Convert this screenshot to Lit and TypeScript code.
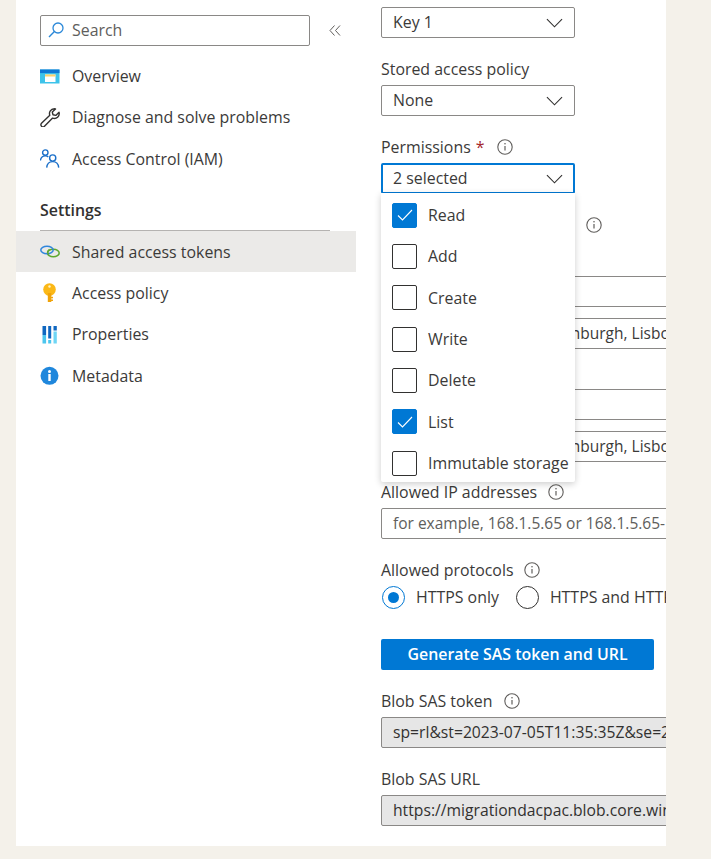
import { LitElement, html, css, svg } from "lit";
import { customElement } from "lit/decorators.js";

const chevron = html`<svg class="chev" viewBox="0 0 18 10" width="17" height="10"><path d="M1 1l8 8 8-8" fill="none" stroke="#323130" stroke-width="1.2"/></svg>`;
const info = html`<svg class="info" viewBox="0 0 16 16" width="16" height="16"><circle cx="8" cy="8" r="7.2" fill="none" stroke="#605e5c" stroke-width="1.1"/><path d="M8 7v4.6" stroke="#605e5c" stroke-width="1.2"/><circle cx="8" cy="4.8" r=".8" fill="#605e5c"/></svg>`;

const icons: Record<string, unknown> = {
  overview: svg`<rect x="0" y="2.500" width="19.500" height="14" fill="#3ec3ea"/><rect x="0" y="2.500" width="19.500" height="3.600" fill="#0f78d4"/><rect x="5" y="7.500" width="10.500" height="7.500" fill="#fff"/><rect x="5" y="7.500" width="10.500" height="2" fill="#fcd26b"/>`,
  wrench: svg`<path d="M14.200 .8a4.800 4.800 0 0 0-4.400 6.500L1.500 15.300a2.100 2.100 0 0 0 3 3l8.100-8.200a4.800 4.800 0 0 0 6.400-5.800l-3.200 3.100-2.800-.7-.7-2.700 3.200-3.100a4.800 4.800 0 0 0-1.300-.1z" fill="none" stroke="#323130" stroke-width="1.400" stroke-linejoin="round"/>`,
  users: svg`<g fill="none" stroke="#1a6fc9" stroke-width="1.400"><circle cx="5.300" cy="3.600" r="2.700"/><path d="M.4 11.500c.5-3 2.200-4.600 4.900-4.600 1.200 0 2.200.3 3 1"/><circle cx="12.700" cy="9" r="3.100"/><path d="M6.700 18.600c.3-3.500 2.600-6 6-6s5.700 2.500 6 6"/></g>`,
  links: svg`<g fill="none" stroke-width="1.500"><ellipse cx="13.300" cy="11" rx="5.900" ry="3.800" stroke="#5da82f"/><ellipse cx="7" cy="8" rx="6.200" ry="3.800" stroke="#2f86dc"/><path d="M9 12.500a6 3.800 0 0 1 .6-5.200" stroke="#5da82f"/></g>`,
  key: svg`<circle cx="9.500" cy="6.500" r="6.300" fill="#fbb817"/><rect x="7.800" y="10" width="3.500" height="9" fill="#f0a30a"/><rect x="11" y="13.800" width="2" height="1.500" fill="#f0a30a"/><rect x="11" y="16.500" width="2" height="1.500" fill="#f0a30a"/><circle cx="9.500" cy="3.500" r="1.200" fill="#fff2c4"/>`,
  props: svg`<rect x="2.500" y="1" width="3.600" height="9" fill="#0f67c0"/><rect x="2.500" y="10" width="3.600" height="8.500" fill="#4cc6ee"/><rect x="8.200" y="1" width="3" height="12.500" fill="#0f67c0"/><rect x="8.200" y="15" width="3" height="3.500" fill="#4cc6ee"/><rect x="13.500" y="1" width="3.300" height="4.500" fill="#0f67c0"/><rect x="13.500" y="6.500" width="3.300" height="12" fill="#6fd6f5"/>`,
  meta: svg`<circle cx="9.500" cy="9.800" r="9" fill="#1f87dc"/><rect x="8.300" y="8" width="2.400" height="7" fill="#fff"/><circle cx="9.500" cy="5.400" r="1.500" fill="#fff"/>`,
};

const top = [
  ["overview", "Overview"],
  ["wrench", "Diagnose and solve problems"],
  ["users", "Access Control (IAM)"],
];
const settings = [
  ["links", "Shared access tokens", true],
  ["key", "Access policy", false],
  ["props", "Properties", false],
  ["meta", "Metadata", false],
];
const perms: [string, boolean][] = [
  ["Read", true],
  ["Add", false],
  ["Create", false],
  ["Write", false],
  ["Delete", false],
  ["List", true],
  ["Immutable storage", false],
];
const tz = "(UTC+00:00) Dublin, Edinburgh, Lisbon, London";

@customElement("app-root")
export class AppRoot extends LitElement {
  static styles = css`
    :host {
      display: block;
      min-height: 859px;
      background: #f4f1ea;
      font-family: "Open Sans", "Noto Sans", sans-serif;
      font-size: 15.9px;
      color: #3b3a39;
    }
    .panel {
      display: flex;
      width: 650px;
      height: 846px;
      margin-left: 16px;
      background: #fff;
      overflow: hidden;
    }
    .side {
      flex: 0 0 340px;
      padding-top: 15px;
    }
    .search-row {
      display: flex;
      align-items: center;
      padding-left: 24px;
      margin-bottom: 9.5px;
    }
    .search {
      box-sizing: border-box;
      width: 270px;
      height: 31px;
      border: 1px solid #8a8886;
      border-radius: 2px;
      display: flex;
      align-items: center;
      gap: 8px;
      padding: 0 0 2px 7px;
      color: #605e5c;
    }
    .collapse {
      margin-left: 19px;
    }
    .nav {
      height: 41.33px;
      display: flex;
      align-items: center;
      gap: 12px;
      padding-left: 24px;
    }
    .nav.sel {
      background: #ebeae8;
    }
    .nav svg {
      flex: none;
      width: 20px;
      height: 19px;
    }
    .section {
      margin: 20.5px 26px 0 24px;
      height: 31px;
      box-sizing: border-box;
      border-bottom: 1px solid #b5b3b1;
      font-weight: 600;
      color: #323130;
      line-height: 21px;
    }
    .main {
      flex: 1;
      min-width: 0;
      position: relative;
      overflow: hidden;
      padding: 7px 0 0 25px;
    }
    .field {
      margin-bottom: 20px;
    }
    .field.tight {
      margin-bottom: 13px;
    }
    .field.last-tz {
      margin-bottom: 19px;
    }
    .label {
      display: flex;
      align-items: center;
      height: 22px;
      margin-bottom: 5px;
      white-space: nowrap;
    }
    .label .info {
      margin-left: 11px;
    }
    .req {
      color: #a4262c;
      margin-left: 5px;
    }
    .label .req + .info {
      margin-left: 12px;
    }
    .ctl {
      box-sizing: border-box;
      height: 31px;
      border: 1px solid #8a8886;
      border-radius: 2px;
      display: flex;
      align-items: center;
      padding: 0 11px 2px;
      white-space: nowrap;
      overflow: hidden;
    }
    .select {
      width: 194px;
      justify-content: space-between;
    }
    .select .chev {
      margin: 2px 0 0;
    }
    .select.focus {
      border: 2px solid #0078d4;
      padding: 0 10px 2px;
    }
    .wide {
      width: 330px;
    }
    .stack {
      margin-bottom: 11px;
    }
    .tz {
      padding-left: 20px;
      font-size: 15.5px;
    }
    .ph {
      color: #605e5c;
      font-size: 15.5px;
    }
    .disabled {
      background: #e6e6e6;
      color: #323130;
      font-size: 15.7px;
    }
    .radios {
      display: flex;
      align-items: center;
      height: 22px;
      white-space: nowrap;
      margin-bottom: 31px;
      padding-left: 1px;
    }
    .radio {
      box-sizing: border-box;
      flex: none;
      width: 23px;
      height: 23px;
      border-radius: 50%;
      border: 1.3px solid #323130;
      margin: 0 11px 0 0;
      display: flex;
      align-items: center;
      justify-content: center;
    }
    .radio.on {
      border-color: #0078d4;
    }
    .radio.on::after {
      content: "";
      width: 11px;
      height: 11px;
      border-radius: 50%;
      background: #0078d4;
    }
    .r1 {
      margin-right: 17px;
    }
    .btn {
      box-sizing: border-box;
      width: 273px;
      height: 31px;
      margin-bottom: 20px;
      padding-bottom: 2px;
      border-radius: 2px;
      background: #0078d4;
      color: #fff;
      font-weight: 600;
      display: flex;
      align-items: center;
      justify-content: center;
    }
    .menu {
      position: absolute;
      left: 25px;
      top: 193px;
      width: 194px;
      height: 289px;
      box-sizing: border-box;
      background: #fff;
      box-shadow: 0 2px 7px rgba(0, 0, 0, 0.2);
      border-radius: 0 0 2px 2px;
      padding-top: 1.5px;
    }
    .opt {
      height: 41.33px;
      display: flex;
      align-items: center;
      gap: 11px;
      padding-left: 11px;
      white-space: nowrap;
    }
    .box {
      box-sizing: border-box;
      flex: none;
      width: 25px;
      height: 25px;
      border: 1.2px solid #323130;
      border-radius: 2px;
      display: flex;
      align-items: center;
      justify-content: center;
    }
    .box.on {
      background: #0078d4;
      border-color: #0078d4;
    }
  `;

  render() {
    return html`<div class="panel">
      <div class="side">
        <div class="search-row">
          <div class="search">
            <svg viewBox="0 0 16 16" width="16" height="16"><circle cx="10" cy="6" r="5" fill="none" stroke="#2b88d8" stroke-width="1.3"/><path d="M6.400 9.600L1 15" stroke="#2b88d8" stroke-width="1.400"/></svg>
            <span>Search</span>
          </div>
          <svg class="collapse" viewBox="0 0 12 11" width="12" height="11"><path d="M5.500.5L1 5.500l4.500 5M11 .5L6.500 5.500l4.500 5" fill="none" stroke="#605e5c" stroke-width="1"/></svg>
        </div>
        ${top.map(([i, t]) => this.nav(i, t, false))}
        <div class="section">Settings</div>
        ${settings.map(([i, t, s]) => this.nav(i as string, t as string, s as boolean))}
      </div>
      <div class="main">
        <div class="field"><div class="ctl select"><span>Key 1</span>${chevron}</div></div>
        <div class="field">
          <div class="label">Stored access policy</div>
          <div class="ctl select"><span>None</span>${chevron}</div>
        </div>
        <div class="field">
          <div class="label">Permissions<span class="req">*</span>${info}</div>
          <div class="ctl select focus"><span>2 selected</span>${chevron}</div>
        </div>
        <div class="field tight">
          <div class="label">Start and expiry date/time${info}</div>
        </div>
        <div class="field tight">
          <div class="label">Start</div>
          <div class="ctl wide stack"></div>
          <div class="ctl wide tz"><span>${tz}</span></div>
        </div>
        <div class="field last-tz">
          <div class="label">Expiry</div>
          <div class="ctl wide stack"></div>
          <div class="ctl wide tz"><span>${tz}</span></div>
        </div>
        <div class="field">
          <div class="label">Allowed IP addresses${info}</div>
          <div class="ctl wide ph">for example, 168.1.5.65 or 168.1.5.65-168.1.5.70</div>
        </div>
        <div class="label">Allowed protocols${info}</div>
        <div class="radios">
          <span class="radio on"></span><span class="r1">HTTPS only</span>
          <span class="radio"></span><span>HTTPS and HTTP</span>
        </div>
        <div class="btn">Generate SAS token and URL</div>
        <div class="field">
          <div class="label">Blob SAS token${info}</div>
          <div class="ctl wide disabled">sp=rl&amp;st=2023-07-05T11:35:35Z&amp;se=2023-07-05T19:35:35Z</div>
        </div>
        <div class="field">
          <div class="label">Blob SAS URL</div>
          <div class="ctl wide disabled">https://migrationdacpac.blob.core.windows.net/</div>
        </div>
        <div class="menu">
          ${perms.map(
            ([t, on]) => html`<div class="opt">
              <span class="box ${on ? "on" : ""}">${on
                ? html`<svg viewBox="0 0 16 12" width="16" height="12"><path d="M1 6.500l4.500 4.500L15 1" fill="none" stroke="#fff" stroke-width="1.100"/></svg>`
                : ""}</span><span>${t}</span>
            </div>`
          )}
        </div>
      </div>
    </div>`;
  }

  nav(icon: string, text: string, sel: boolean) {
    return html`<div class="nav ${sel ? "sel" : ""}">
      <svg viewBox="0 0 20 19">${icons[icon]}</svg><span>${text}</span>
    </div>`;
  }
}
